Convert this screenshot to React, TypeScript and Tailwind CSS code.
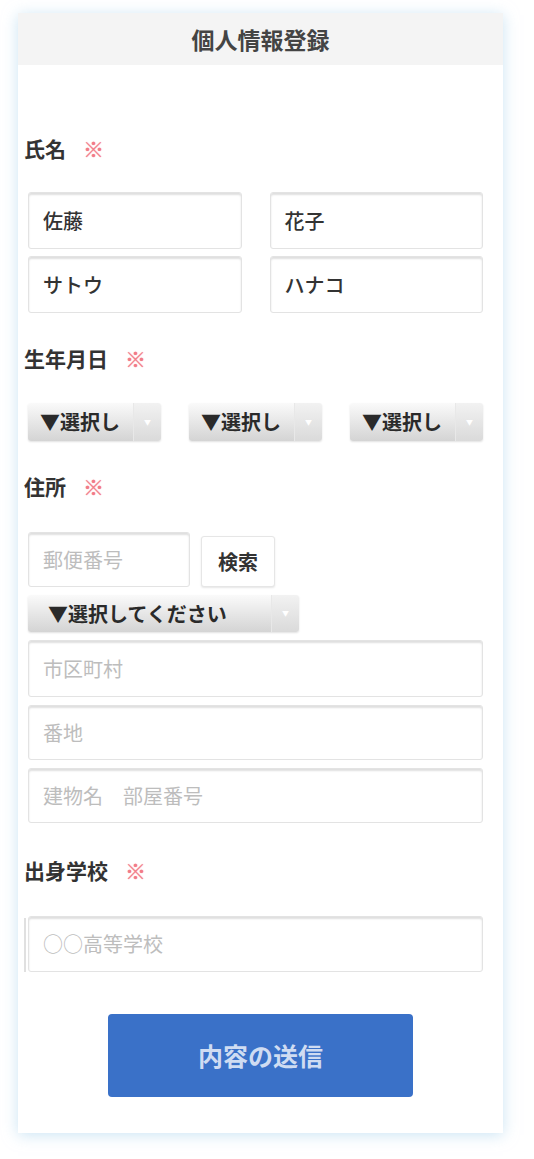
import type { ReactNode } from 'react';

const font = { fontFamily: '"Noto Sans CJK JP", "Noto Sans", sans-serif' };

function Label({ children }: { children: ReactNode }) {
  return (
    <div className="flex items-center gap-[17px] h-6 leading-6 text-[21px] font-bold text-[#333]">
      <span>{children}</span>
      <span className="text-[#f27b88] text-[21px] font-black [text-shadow:0_0_1px_#f27b88]">※</span>
    </div>
  );
}

function Field({ value, placeholder, h = 'h-[57px]', className = '' }: { value?: string; placeholder?: string; h?: string; className?: string }) {
  return (
    <div
      className={`flex items-center px-[14px] bg-white border border-[#e3e3e3] rounded-[3px] shadow-[inset_0_2px_2px_rgba(0,0,0,0.13)] text-[20px] ${h} ${className}`}
    >
      {value ? <span className="text-[#333] font-medium">{value}</span> : <span className="text-[#bdbdbd]">{placeholder}</span>}
    </div>
  );
}

function Select({ text, h = 'h-[38px]', pl = 'pl-[12px]', className = '' }: { text: string; h?: string; pl?: string; className?: string }) {
  return (
    <div className={`flex rounded-[3px] overflow-hidden shadow-[0_1px_2px_rgba(0,0,0,0.12)] ${h} ${className}`}>
      <div className={`flex-1 flex items-center overflow-hidden whitespace-nowrap bg-gradient-to-b from-[#fafafa] to-[#d4d4d4] text-[20px] font-bold text-[#2a2a2a] ${pl}`}>
        {text}
      </div>
      <div className="w-[28px] flex items-center justify-center bg-gradient-to-b from-[#f2f2f2] to-[#dadada] border-l border-[#e8e8e8] text-[7px] text-white">
        ▼
      </div>
    </div>
  );
}

export default function App() {
  return (
    <div className="min-h-[1159px] bg-white pt-[13px] px-[18px] pb-[26px]" style={font}>
      <div className="w-[485px] bg-white shadow-[0_2px_14px_rgba(160,205,235,0.55)]">
        <div className="h-[52px] flex items-center justify-center bg-[#f4f4f4] text-[23px] font-bold text-[#444]">
          個人情報登録
        </div>

        <div className="pl-[6px] pr-[20px] pt-[71px] pb-[36px]">
          <Label>氏名</Label>
          <div className="ml-[4px] mt-[32px] grid grid-cols-2 gap-x-[28px] gap-y-[7px]">
            <Field value="佐藤" />
            <Field value="花子" />
            <Field value="サトウ" />
            <Field value="ハナコ" />
          </div>

          <div className="mt-[33px]">
            <Label>生年月日</Label>
          </div>
          <div className="ml-[4px] mt-[33px] grid grid-cols-3 gap-x-[28px]">
            <Select text="▼選択し" />
            <Select text="▼選択し" />
            <Select text="▼選択し" />
          </div>

          <div className="mt-[33px]">
            <Label>住所</Label>
          </div>
          <div className="ml-[4px] mt-[34px] flex flex-col gap-[8px]">
            <div className="flex items-end gap-[11px]">
              <Field placeholder="郵便番号" h="h-[55px]" className="w-[162px]" />
              <button className="h-[51px] w-[74px] bg-white border border-[#e6e6e6] rounded-[3px] shadow-[0_1px_2px_rgba(0,0,0,0.1)] text-[20px] font-bold text-[#333]">
                検索
              </button>
            </div>
            <Select text="▼選択してください" h="h-[37px]" pl="pl-[20px]" className="w-[271px]" />
            <Field placeholder="市区町村" />
            <Field placeholder="番地" h="h-[55px]" />
            <Field placeholder="建物名　部屋番号" h="h-[55px]" />
          </div>

          <div className="mt-[35px]">
            <Label>出身学校</Label>
          </div>
          <div className="mt-[34px] flex items-stretch">
            <div className="w-[2px] bg-[#e0e0e0] mt-[2px] mr-[2px]" />
            <Field placeholder="○○高等学校" h="h-[56px]" className="flex-1" />
          </div>

          <div className="mt-[42px] flex justify-center pl-[14px]">
            <button className="w-[305px] h-[83px] rounded-[4px] bg-[#3a71c8] text-[25px] font-bold text-[#cfdcf2]">
              内容の送信
            </button>
          </div>
        </div>
      </div>
    </div>
  );
}
